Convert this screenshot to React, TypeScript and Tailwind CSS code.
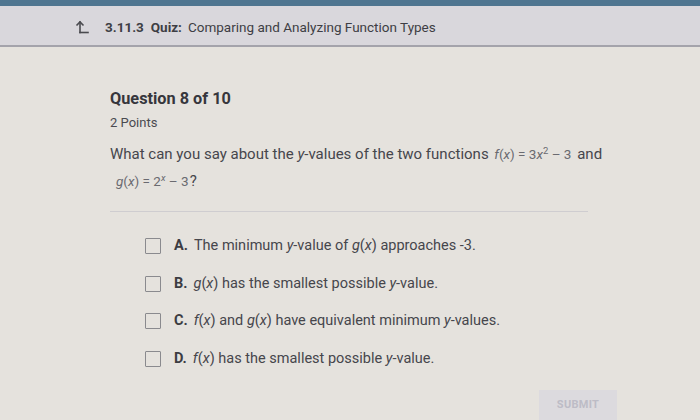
import React from "react";

function ArrowIcon() {
  return (
    <svg width="14" height="14" viewBox="0 0 14 14" fill="none" stroke="#4a4a4f" strokeWidth="1.6" strokeLinecap="square">
      <path d="M5 12.5V2" />
      <path d="M1.5 5.5L5 2L8.5 5.5" strokeLinecap="butt" />
      <path d="M5 12.5H13" />
    </svg>
  );
}

function Option({ letter, children }: { letter: string; children: React.ReactNode }) {
  return (
    <div className="flex items-center h-[37.7px]">
      <div className="w-[16px] h-[16px] border-[1.5px] border-[#8a8a8e] rounded-[1px] mr-[13px]" />
      <span className="font-bold text-[#3c3c42] mr-[6px]">{letter}</span>
      <span className="text-[#46464c]">{children}</span>
    </div>
  );
}

export default function App() {
  return (
    <div
      className="w-[700px] h-[420px] overflow-hidden bg-[#e5e2dd] flex flex-col"
      style={{ fontFamily: "Roboto, 'Liberation Sans', sans-serif" }}
    >
      <div className="h-[6px] bg-[#4f7590]" />
      <div className="h-[41px] bg-[#d9d7dc] border-b-[2px] border-[#a4a3ab] flex items-center pt-[3px] pl-[75px] text-[13.5px] text-[#3e3e44]">
        <ArrowIcon />
        <span className="ml-[16px] font-bold">3.11.3</span>
        <span className="ml-[7px] font-bold">Quiz:</span>
        <span className="ml-[6px]">Comparing and Analyzing Function Types</span>
      </div>
      <div className="pl-[110px] pt-[42px]">
        <div className="text-[16.3px] font-bold text-[#36363c] leading-[20px]">Question 8 of 10</div>
        <div className="text-[13px] text-[#4a4a50] mt-[6px] leading-[16px]">2 Points</div>
        <div className="mt-[10px] text-[15px] text-[#46464c] leading-[27px] w-[510px]">
          What can you say about the <i>y</i>-values of the two functions{" "}
          <span className="text-[13.5px] text-[#6a6a70] mx-[2px]">
            <i>f</i>(<i>x</i>) = 3<i>x</i>
            <sup className="text-[9.5px]">2</sup> – 3
          </span>{" "}
          and
          <br />
          <span className="text-[13.5px] text-[#6a6a70] ml-[6px]">
            <i>g</i>(<i>x</i>) = 2<sup className="text-[9.5px]"><i>x</i></sup> – 3
          </span>
          <span className="ml-[1px]">?</span>
        </div>
        <div className="mt-[16px] w-[478px] h-px bg-[#cfcdd0]" />
        <div className="pl-[35px] mt-[15px] text-[14.5px] flex flex-col">
          <Option letter="A.">
            The minimum <i>y</i>-value of <i>g</i>(<i>x</i>) approaches -3.
          </Option>
          <Option letter="B.">
            <i>g</i>(<i>x</i>) has the smallest possible <i>y</i>-value.
          </Option>
          <Option letter="C.">
            <i>f</i>(<i>x</i>) and <i>g</i>(<i>x</i>) have equivalent minimum <i>y</i>-values.
          </Option>
          <Option letter="D.">
            <i>f</i>(<i>x</i>) has the smallest possible <i>y</i>-value.
          </Option>
        </div>
      </div>
      <div className="flex justify-end pr-[83px] mt-auto">
        <div className="w-[78px] h-[30px] bg-[#dcdade] flex items-center justify-center text-[11px] font-bold text-[#bdbcc6] tracking-[0.3px]">
          SUBMIT
        </div>
      </div>
    </div>
  );
}
